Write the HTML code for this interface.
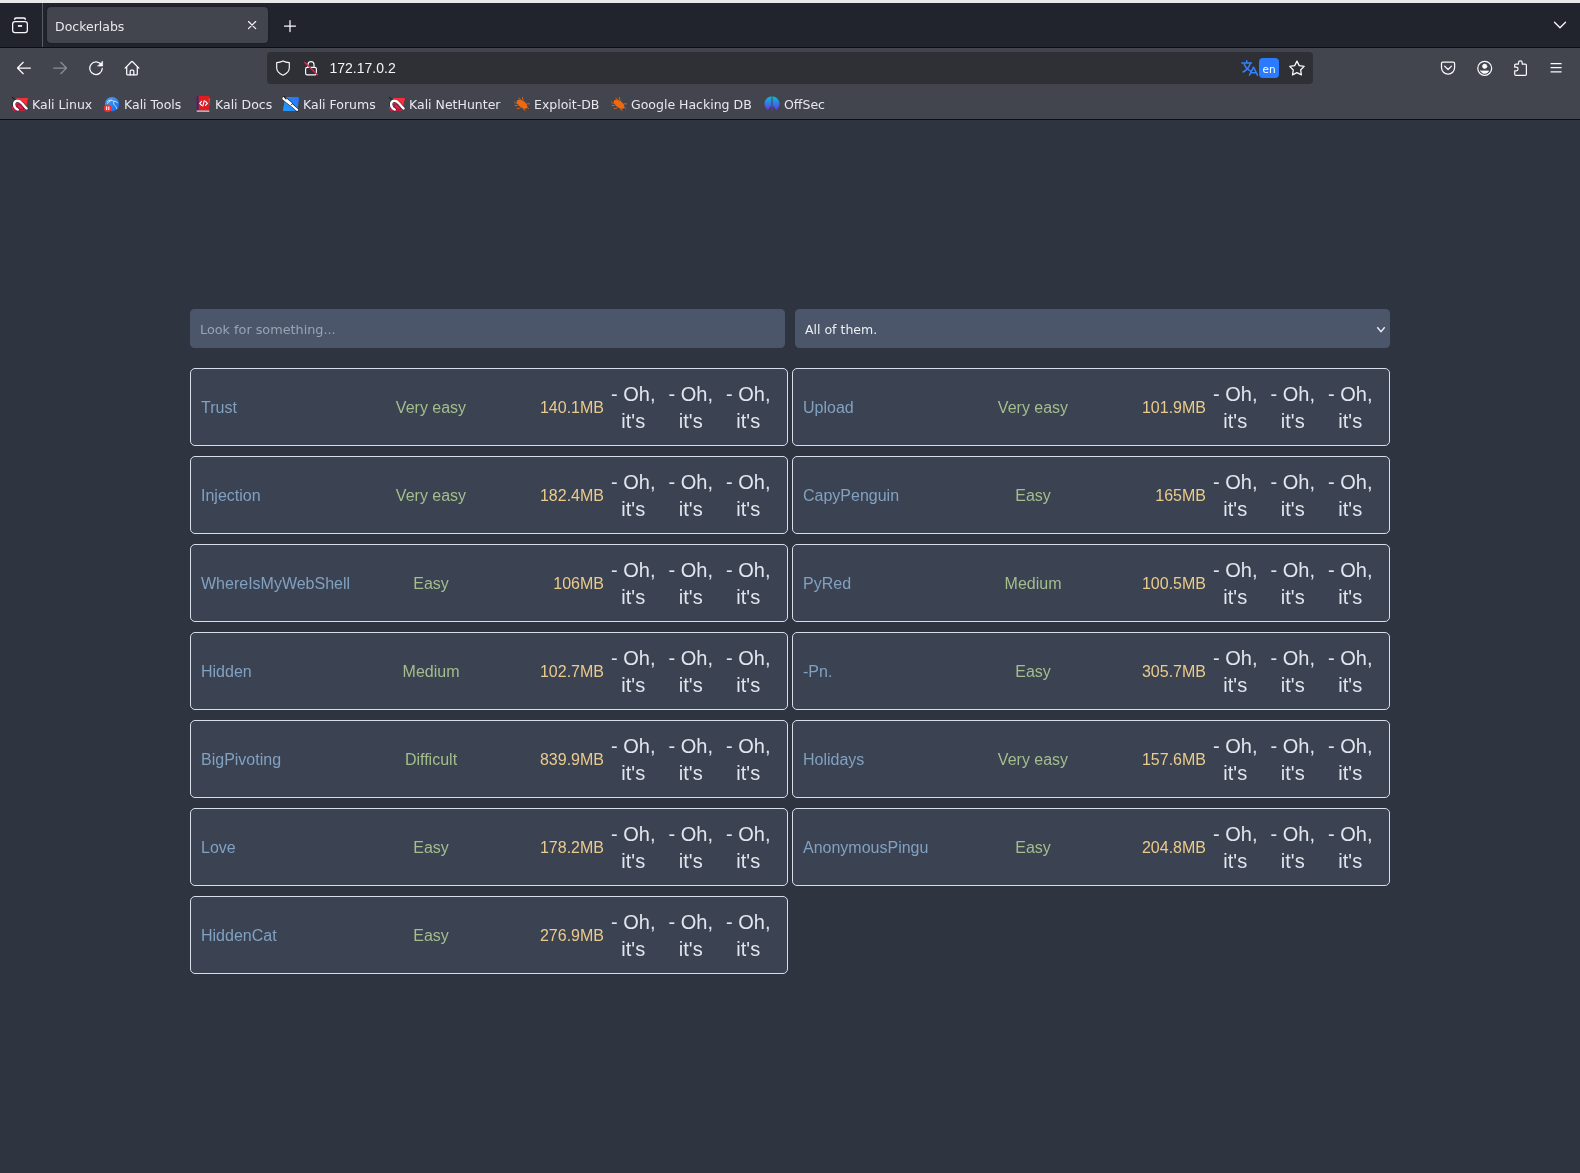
<!DOCTYPE html>
<html lang="en">
<head>
<meta charset="utf-8">
<title>Dockerlabs</title>
<style>
*{box-sizing:border-box;margin:0;padding:0}
html,body{width:1580px;height:1173px;overflow:hidden;background:#2e3440}
body{position:relative;font-family:"Liberation Sans",sans-serif;will-change:transform}
.ui{font-family:"DejaVu Sans","Liberation Sans",sans-serif}
/* chrome */
#topstrip{position:absolute;left:0;top:0;width:1580px;height:3px;background:#e9e9e9}
#tabbar{position:absolute;left:0;top:3px;width:1580px;height:44px;background:#22242d}
#tabsep{position:absolute;left:42px;top:3px;width:1px;height:44px;background:#595b62}
#tab{position:absolute;left:47px;top:7px;width:221px;height:36px;background:#42454e;border-radius:4px;box-shadow:0 0 1.5px rgba(0,0,0,.55)}
#tabtitle{position:absolute;left:55px;top:19px;font-size:12.5px;color:#e8e8ec;line-height:16px;white-space:nowrap}
#navsep{position:absolute;left:0;top:47px;width:1580px;height:1px;background:#0d0e13}
#navbar{position:absolute;left:0;top:48px;width:1580px;height:71px;background:#42454e}
#urlbar{position:absolute;left:267px;top:52px;width:1046px;height:32px;background:#2f3035;border-radius:4px}
#urltext{position:absolute;left:329.5px;top:60px;font-size:14px;font-family:"Liberation Sans",sans-serif;color:#f5f5f7;line-height:16px;white-space:nowrap}
#chromeline{position:absolute;left:0;top:119px;width:1580px;height:1px;background:#0d0f15}
.bm{position:absolute;top:97px;font-size:12.5px;color:#e8e8ec;line-height:16px;white-space:nowrap}
svg.ic{position:absolute;overflow:visible}
#enb{position:absolute;left:1259px;top:58px;width:20px;height:20px;border-radius:4px;background:#2a7bff;color:#fff;font-size:10.5px;line-height:23px;text-align:center;font-family:"DejaVu Sans",sans-serif}
/* page */
#search{position:absolute;left:190px;top:309px;width:595px;height:39px;background:#4c566a;border-radius:4.5px}
#search span{position:absolute;left:10px;top:13px;font-size:12.8px;line-height:16px;color:#9ba3b3;white-space:nowrap}
#select{position:absolute;left:795px;top:309px;width:595px;height:39px;background:#4c566a;border-radius:4.5px}
#select span{position:absolute;left:10px;top:13px;font-size:12.5px;line-height:16px;color:#eceff4;white-space:nowrap}
.card{position:absolute;width:598px;height:78px;background:#3b4252;border:1px solid #d8dee9;border-radius:5px}
.card .n,.card .d,.card .s{position:absolute;top:29px;font-size:16px;line-height:20px;white-space:nowrap}
.card .n{left:10px;color:#81a1c1}
.card .d{left:182px;width:116px;text-align:center;color:#a3be8c}
.card .s{left:298px;width:115px;text-align:right;color:#ebcb8b}
.card .b{position:absolute;top:12px;width:57.5px;text-align:center;font-size:20px;line-height:27.25px;color:#e1e5ed;font-family:"Liberation Sans",sans-serif}
.card .b1{left:413.5px}.card .b2{left:471px}.card .b3{left:528.5px}
</style>
</head>
<body>
<div id="topstrip"></div>
<div id="tabbar"></div>
<div id="tabsep"></div>
<div id="tab"></div>
<div id="tabtitle" class="ui">Dockerlabs</div>
<div id="navsep"></div>
<div id="navbar"></div>
<div id="urlbar"></div>
<div id="urltext">172.17.0.2</div>
<div id="chromeline"></div>
<svg class="ic" style="left:12px;top:96px" width="16" height="16" viewBox="0 0 16 16"><path d="M4.800 1.900L16 2.100 13.700 13.200 12.300 14.500 2.100 15 0 12.200z" fill="#fa2c37"/><path d="M0 12.200L2.100 15l10.200-.5 1.400-1.300L6 7 1 9z" fill="#d81c4c"/><path d="M0.200 1.400L3.600 3.800" fill="none" stroke="#16171c" stroke-width="1" stroke-linecap="round"/><path d="M5.800 13.600C3.500 12.400 2 10.400 2.100 8.300 2.200 6.200 3.600 4.800 5.600 4.800c2 0 3.400 1.400 4.800 3 1.300 1.600 2.600 3.400 4.300 4.600" fill="none" stroke="#16171c" stroke-width="3.300" stroke-linecap="round"/><path d="M5.800 13.600C3.500 12.400 2 10.400 2.100 8.300 2.200 6.200 3.600 4.800 5.600 4.800c2 0 3.400 1.400 4.800 3 1.300 1.600 2.600 3.400 4.300 4.600" fill="none" stroke="#fff" stroke-width="2.400" stroke-linecap="round"/><path d="M5.200 9.300c.3-1.200 1.500-1.600 2.600-.8 1.300.9 2.700 2.700 4.200 4.700l-3.800.3C6.600 12.300 5 11 5.200 9.300z" fill="#e2204a" stroke="#16171c" stroke-width=".4"/></svg>
<div class="bm ui" style="left:32px">Kali Linux</div>
<svg class="ic" style="left:104px;top:96px" width="16" height="16" viewBox="0 0 16 16"><defs><linearGradient id="gkt104" x1="0" y1="0" x2="1" y2="1"><stop offset="0" stop-color="#4aa8f2"/><stop offset="1" stop-color="#1565e6"/></linearGradient></defs><circle cx="8.100" cy="8.100" r="7.150" fill="url(#gkt104)"/><path d="M3.500 5.500C5.500 3.800 8 3.600 9.800 5.300c1.500-.3 2.900.3 3.700 1.500M9.800 5.300c-.6 1.500-.2 3 1 4.100 1 .9 1.700 1.900 2 3.100M7 4.500c-1.500.6-2.700 1.600-3.500 3" fill="none" stroke="#e9f3ff" stroke-width=".8" stroke-linecap="round"/><circle cx="3.600" cy="12.200" r="3.800" fill="#fb2b2e"/><path d="M2.600 10.500v3.400M4.800 10.500v3.400" stroke="#fff" stroke-width="1.100"/></svg>
<div class="bm ui" style="left:124px">Kali Tools</div>
<svg class="ic" style="left:195px;top:96px" width="16" height="16" viewBox="0 0 16 16"><path d="M1.500 1.200C1.500.5 2 0 2.700 0h10.600c.6 0 1 .4 1 1v13.500H1.500z" fill="#e11b22"/><path d="M1.500 1.200C1.500.5 2 0 2.700 0h.9v14.500H1.500z" fill="#17357f"/><path d="M1.500 14.500h12.800v1.300H2.600c-.6 0-1.100-.6-1.100-1.300z" fill="#f3c9c9"/><path d="M13.800 2.500h.8v2h-.8z" fill="#f39a1e"/><path d="M13.800 5h.8v2h-.8z" fill="#37b24d"/><path d="M13.800 7.500h.8v2h-.8z" fill="#2b78e4"/><path d="M6.600 5.300L4.700 7.300l1.900 2M10.500 5.300l1.900 2-1.900 2M9.300 4.600L7.800 10" fill="none" stroke="#fff" stroke-width="1.100" stroke-linecap="round" stroke-linejoin="round"/></svg>
<div class="bm ui" style="left:215px">Kali Docs</div>
<svg class="ic" style="left:283px;top:96px" width="16" height="16" viewBox="0 0 16 16"><defs><linearGradient id="gkf" x1="0" y1="1" x2="1" y2="0"><stop offset="0" stop-color="#1f9cf9"/><stop offset="1" stop-color="#2a72fb"/></linearGradient></defs><path d="M3.400 1h11.400c.8 0 1.300.6 1.200 1.300l-1.500 11.500c-.1.700-.7 1.200-1.400 1.200H1.200c-.7 0-1.300-.6-1.200-1.300L2 2.200C2.100 1.500 2.700 1 3.400 1z" fill="url(#gkf)"/><path d="M.9 2.400L7.300 7.400" fill="none" stroke="#15161b" stroke-width="4.200" stroke-linecap="round"/><path d="M1 2.300l13.200 11.500" fill="none" stroke="#15161b" stroke-width="3.300" stroke-linecap="round"/><path d="M.9 2.400L7.300 7.400" fill="none" stroke="#fff" stroke-width="3.200" stroke-linecap="round"/><path d="M1 2.300l13.200 11.500" fill="none" stroke="#fff" stroke-width="2.300" stroke-linecap="round"/><path d="M1.300.8l1.700 2.200" stroke="#15161b" stroke-width="1.100" stroke-linecap="round"/><circle cx="8.600" cy="8.500" r=".55" fill="#15161b"/></svg>
<div class="bm ui" style="left:303px">Kali Forums</div>
<svg class="ic" style="left:389px;top:96px" width="16" height="16" viewBox="0 0 16 16"><path d="M4.800 1.900L16 2.100 13.700 13.200 12.300 14.500 2.100 15 0 12.200z" fill="#fa2c37"/><path d="M0 12.200L2.100 15l10.200-.5 1.400-1.300L6 7 1 9z" fill="#d81c4c"/><path d="M0.200 1.400L3.600 3.800" fill="none" stroke="#16171c" stroke-width="1" stroke-linecap="round"/><path d="M5.800 13.600C3.500 12.400 2 10.400 2.100 8.300 2.200 6.200 3.600 4.800 5.600 4.800c2 0 3.400 1.400 4.800 3 1.300 1.600 2.600 3.400 4.300 4.600" fill="none" stroke="#16171c" stroke-width="3.300" stroke-linecap="round"/><path d="M5.800 13.600C3.500 12.400 2 10.400 2.100 8.300 2.200 6.200 3.600 4.800 5.600 4.800c2 0 3.400 1.400 4.800 3 1.300 1.600 2.600 3.400 4.300 4.600" fill="none" stroke="#fff" stroke-width="2.400" stroke-linecap="round"/><path d="M5.200 9.300c.3-1.200 1.500-1.600 2.600-.8 1.300.9 2.700 2.700 4.200 4.700l-3.800.3C6.600 12.300 5 11 5.200 9.300z" fill="#e2204a" stroke="#16171c" stroke-width=".4"/></svg>
<div class="bm ui" style="left:409px">Kali NetHunter</div>
<svg class="ic" style="left:514px;top:96px" width="16" height="16" viewBox="0 0 16 16"><g fill="none" stroke="#f1690f" stroke-linecap="round" stroke-width=".9"><path d="M5 2.200c.7.200 1.300.8 1.500 1.700M8.500 1.500c-.1.900.1 1.800.7 2.500M.5 6c.8.900 1.700 1.400 2.800 1.500M12 8.300c1.100-.5 2.300-.7 3.500-.5M3 12.500c1.200.2 2.400-.1 3.300-.8M9.500 13c.3.700.8 1.200 1.500 1.500M12.500 11c.8.200 1.500.6 2 1.300M1.200 9.500c.7.300 1.400.3 2.100 0"/></g><path d="M3.200 4.300c1.600-1.100 4.200-.7 6.500.9 2.300 1.600 4 4.200 3.600 6-.3 1.500-2.300 1.900-4.300 1.200C7 11.700 4.800 10 3.600 8.100 2.700 6.700 2.400 5.100 3.200 4.300z" fill="#f1690f"/></svg>
<div class="bm ui" style="left:534px">Exploit-DB</div>
<svg class="ic" style="left:611px;top:96px" width="16" height="16" viewBox="0 0 16 16"><g fill="none" stroke="#f1690f" stroke-linecap="round" stroke-width=".9"><path d="M5 2.200c.7.200 1.300.8 1.500 1.700M8.500 1.500c-.1.900.1 1.800.7 2.500M.5 6c.8.900 1.700 1.400 2.800 1.500M12 8.300c1.100-.5 2.300-.7 3.500-.5M3 12.500c1.200.2 2.400-.1 3.300-.8M9.500 13c.3.700.8 1.200 1.500 1.500M12.500 11c.8.200 1.500.6 2 1.300M1.200 9.500c.7.300 1.400.3 2.100 0"/></g><path d="M3.200 4.300c1.600-1.100 4.200-.7 6.500.9 2.300 1.600 4 4.200 3.600 6-.3 1.500-2.300 1.900-4.300 1.200C7 11.700 4.800 10 3.600 8.100 2.700 6.700 2.400 5.100 3.200 4.300z" fill="#f1690f"/></svg>
<div class="bm ui" style="left:631px">Google Hacking DB</div>
<svg class="ic" style="left:764px;top:96px" width="16" height="16" viewBox="0 0 16 16"><defs><linearGradient id="gos" x1="0" y1="0" x2="0" y2="1"><stop offset="0" stop-color="#0fbad2"/><stop offset=".55" stop-color="#3b6fe8"/><stop offset="1" stop-color="#7a1df2"/></linearGradient></defs><path d="M7 .5C3.2 1 .5 4 .5 7.700c0 2.600 1.300 4.900 3.400 6.300L7 9.800zM9 .5c3.800.5 6.500 3.500 6.500 7.200 0 2.600-1.300 4.900-3.400 6.300L9 9.800zM7.450.3h1.100l-.25 15.400h-.6z" fill="url(#gos)"/></svg>
<div class="bm ui" style="left:784px">OffSec</div>
<svg class="ic" style="left:12px;top:17px" width="16" height="16" viewBox="0 0 16 16" fill="none" stroke="#fbfbfe" stroke-width="1.25" stroke-linecap="round" stroke-linejoin="round"><rect x=".65" y="4.650" width="14.700" height="10.850" rx="2.300"/><path d="M2.650 2.700v-.3A1.500 1.500 0 0 1 4.150.9h7.700a1.500 1.500 0 0 1 1.500 1.500v.3" stroke-width="1.550" stroke-linecap="butt"/><rect x="5.900" y="8.100" width="4.200" height="1.700" fill="#fbfbfe" stroke="none"/></svg>
<svg class="ic" style="left:244px;top:17px" width="16" height="16" viewBox="0 0 16 16" fill="none" stroke="#fbfbfe" stroke-width="1.25" stroke-linecap="round" stroke-linejoin="round"><path d="M4.500 4.500l7.200 7.200M11.700 4.500l-7.200 7.200" stroke-width="1.150"/></svg>
<svg class="ic" style="left:281.7px;top:17.6px" width="16" height="16" viewBox="0 0 16 16" fill="none" stroke="#fbfbfe" stroke-width="1.25" stroke-linecap="round" stroke-linejoin="round"><path d="M8 2.500v11M2.500 8h11" stroke-width="1.250"/></svg>
<svg class="ic" style="left:1552px;top:17px" width="16" height="16" viewBox="0 0 16 16" fill="none" stroke="#fbfbfe" stroke-width="1.25" stroke-linecap="round" stroke-linejoin="round"><path d="M2.500 5.200L8 10.700l5.500-5.500" stroke-width="1.300"/></svg>
<svg class="ic" style="left:16px;top:60px" width="16" height="16" viewBox="0 0 16 16" fill="none" stroke="#fbfbfe" stroke-width="1.25" stroke-linecap="round" stroke-linejoin="round"><path d="M14.400 8H2M7.200 2.300L1.500 8l5.700 5.700"/></svg>
<svg class="ic" style="left:52px;top:60px;opacity:.4" width="16" height="16" viewBox="0 0 16 16" fill="none" stroke="#fbfbfe" stroke-width="1.25" stroke-linecap="round" stroke-linejoin="round"><path d="M1.600 8H14M8.800 2.300L14.500 8l-5.700 5.700"/></svg>
<svg class="ic" style="left:88px;top:60px" width="16" height="16" viewBox="0 0 16 16" fill="none" stroke="#fbfbfe" stroke-width="1.25" stroke-linecap="round" stroke-linejoin="round"><path d="M13.300 4.800A6.300 6.300 0 1 0 14.300 8.300"/><path d="M14.600 1.400v4.700H9.900z" fill="#fbfbfe" stroke-width=".6"/></svg>
<svg class="ic" style="left:123.6px;top:60px" width="16" height="16" viewBox="0 0 16 16" fill="none" stroke="#fbfbfe" stroke-width="1.25" stroke-linecap="round" stroke-linejoin="round"><path d="M1.100 8.100L7.400 1.800a.85.85 0 0 1 1.200 0l6.300 6.300"/><path d="M2.700 6.900v7c0 .6.400 1 1 1h8.600c.6 0 1-.4 1-1v-7"/><path d="M6.200 14.800v-3.800c0-.6.400-1 1-1h1.600c.6 0 1 .4 1 1v3.800"/></svg>
<svg class="ic" style="left:275px;top:60px" width="16" height="16" viewBox="0 0 16 16" fill="none" stroke="#fbfbfe" stroke-width="1.25" stroke-linecap="round" stroke-linejoin="round"><path d="M8 .9c2 1 4 1.500 6.300 1.700v5.200c0 3.400-2.500 6-6.300 7.400-3.800-1.400-6.300-4-6.300-7.400V2.600C4 2.400 6 1.900 8 .9z" stroke-width="1.150"/></svg>
<svg class="ic" style="left:303px;top:60px" width="16" height="16" viewBox="0 0 16 16" fill="none" stroke="#fbfbfe" stroke-width="1.25" stroke-linecap="round" stroke-linejoin="round"><rect x="2.600" y="7.300" width="10.800" height="7.600" rx="1.600" stroke-width="1.150"/><path d="M5 7.200V4.600a3 3 0 0 1 6 0v2.600" stroke-width="1.150"/><path d="M1.800 2.500l12.700 12.300" stroke="#e22850" stroke-width="1.300"/></svg>
<svg class="ic" style="left:1241px;top:59.5px" width="16" height="16" viewBox="0 0 16 16" fill="none" stroke="#fbfbfe" stroke-width="1.25" stroke-linecap="round" stroke-linejoin="round"><g stroke="#3382ff" stroke-width="1.500"><path d="M.9 2.900h9.600M5.700.7v2"/><path d="M9.300 3.300C8.300 7 5.800 10.200 2.100 12"/><path d="M3.200 4C4.300 7 6.500 9.500 9.700 11.200"/><path d="M8.500 15.200l4-8 4 8M10 12.700h5"/></g></svg>
<svg class="ic" style="left:1289px;top:60px" width="16" height="16" viewBox="0 0 16 16" fill="none" stroke="#fbfbfe" stroke-width="1.25" stroke-linecap="round" stroke-linejoin="round"><path d="M7.95 1.15L10.21 5.64L15.18 6.40L11.61 9.94L12.42 14.90L7.95 12.60L3.48 14.90L4.29 9.94L0.72 6.40L5.69 5.64z" stroke-width="1.250"/></svg>
<svg class="ic" style="left:1440px;top:60px" width="16" height="16" viewBox="0 0 16 16" fill="none" stroke="#fbfbfe" stroke-width="1.25" stroke-linecap="round" stroke-linejoin="round"><path d="M2.900 2.100h10.300c.8 0 1.400.6 1.400 1.400v4.100a6.550 6.550 0 0 1-13.100 0V3.500c0-.8.600-1.400 1.400-1.400z"/><path d="M4.600 6.100l3.450 3.400 3.450-3.400"/></svg>
<svg class="ic" style="left:1476.5px;top:60px" width="16" height="16" viewBox="0 0 16 16" fill="none" stroke="#fbfbfe" stroke-width="1.25" stroke-linecap="round" stroke-linejoin="round"><circle cx="7.7" cy="8.3" r="6.950"/><circle cx="7.700" cy="6.300" r="2.200" fill="#fbfbfe" stroke-width=".6"/><path d="M3.700 10.900h8c-.8 1.700-2.300 2.500-4 2.500s-3.200-.8-4-2.500z" fill="#fbfbfe" stroke-width=".6"/></svg>
<svg class="ic" style="left:1512px;top:60px" width="16" height="16" viewBox="0 0 16 16" fill="none" stroke="#fbfbfe" stroke-width="1.25" stroke-linecap="round" stroke-linejoin="round"><path d="M6.5 4.1V2.7a1.85 1.85 0 0 1 3.7 0v1.4h3.1c.6 0 1.1.5 1.1 1.1v9c0 .6-.5 1.1-1.1 1.1H3.800c-.6 0-1.100-.5-1.100-1.100v-3.300h1.500a1.850 1.850 0 0 0 0-3.700H2.700V5.200c0-.6.5-1.100 1.100-1.100z" stroke-width="1.200"/></svg>
<svg class="ic" style="left:1548px;top:60px" width="16" height="16" viewBox="0 0 16 16" fill="none" stroke="#fbfbfe" stroke-width="1.25" stroke-linecap="round" stroke-linejoin="round"><path d="M2.600 3.600h11M2.600 7.700h11M2.600 11.800h11" stroke-linecap="butt" stroke-width="1.300"/></svg>
<div id="enb">en</div>
<div id="search" class="ui"><span>Look for something...</span></div>
<div id="select" class="ui"><span>All of them.</span><svg style="position:absolute;left:580px;top:16.2px" width="12" height="10" viewBox="0 0 12 10" fill="none" stroke="#eceff4" stroke-width="1.400"><path d="M2.300 2.300L6 6.600l3.700-4.300"/></svg></div>
<div class="card" style="left:190px;top:368px"><span class="n">Trust</span><span class="d">Very easy</span><span class="s">140.1MB</span><span class="b b1 ui">- Oh, it's</span><span class="b b2 ui">- Oh, it's</span><span class="b b3 ui">- Oh, it's</span></div>
<div class="card" style="left:792px;top:368px"><span class="n">Upload</span><span class="d">Very easy</span><span class="s">101.9MB</span><span class="b b1 ui">- Oh, it's</span><span class="b b2 ui">- Oh, it's</span><span class="b b3 ui">- Oh, it's</span></div>
<div class="card" style="left:190px;top:456px"><span class="n">Injection</span><span class="d">Very easy</span><span class="s">182.4MB</span><span class="b b1 ui">- Oh, it's</span><span class="b b2 ui">- Oh, it's</span><span class="b b3 ui">- Oh, it's</span></div>
<div class="card" style="left:792px;top:456px"><span class="n">CapyPenguin</span><span class="d">Easy</span><span class="s">165MB</span><span class="b b1 ui">- Oh, it's</span><span class="b b2 ui">- Oh, it's</span><span class="b b3 ui">- Oh, it's</span></div>
<div class="card" style="left:190px;top:544px"><span class="n">WhereIsMyWebShell</span><span class="d">Easy</span><span class="s">106MB</span><span class="b b1 ui">- Oh, it's</span><span class="b b2 ui">- Oh, it's</span><span class="b b3 ui">- Oh, it's</span></div>
<div class="card" style="left:792px;top:544px"><span class="n">PyRed</span><span class="d">Medium</span><span class="s">100.5MB</span><span class="b b1 ui">- Oh, it's</span><span class="b b2 ui">- Oh, it's</span><span class="b b3 ui">- Oh, it's</span></div>
<div class="card" style="left:190px;top:632px"><span class="n">Hidden</span><span class="d">Medium</span><span class="s">102.7MB</span><span class="b b1 ui">- Oh, it's</span><span class="b b2 ui">- Oh, it's</span><span class="b b3 ui">- Oh, it's</span></div>
<div class="card" style="left:792px;top:632px"><span class="n">-Pn.</span><span class="d">Easy</span><span class="s">305.7MB</span><span class="b b1 ui">- Oh, it's</span><span class="b b2 ui">- Oh, it's</span><span class="b b3 ui">- Oh, it's</span></div>
<div class="card" style="left:190px;top:720px"><span class="n">BigPivoting</span><span class="d">Difficult</span><span class="s">839.9MB</span><span class="b b1 ui">- Oh, it's</span><span class="b b2 ui">- Oh, it's</span><span class="b b3 ui">- Oh, it's</span></div>
<div class="card" style="left:792px;top:720px"><span class="n">Holidays</span><span class="d">Very easy</span><span class="s">157.6MB</span><span class="b b1 ui">- Oh, it's</span><span class="b b2 ui">- Oh, it's</span><span class="b b3 ui">- Oh, it's</span></div>
<div class="card" style="left:190px;top:808px"><span class="n">Love</span><span class="d">Easy</span><span class="s">178.2MB</span><span class="b b1 ui">- Oh, it's</span><span class="b b2 ui">- Oh, it's</span><span class="b b3 ui">- Oh, it's</span></div>
<div class="card" style="left:792px;top:808px"><span class="n">AnonymousPingu</span><span class="d">Easy</span><span class="s">204.8MB</span><span class="b b1 ui">- Oh, it's</span><span class="b b2 ui">- Oh, it's</span><span class="b b3 ui">- Oh, it's</span></div>
<div class="card" style="left:190px;top:896px"><span class="n">HiddenCat</span><span class="d">Easy</span><span class="s">276.9MB</span><span class="b b1 ui">- Oh, it's</span><span class="b b2 ui">- Oh, it's</span><span class="b b3 ui">- Oh, it's</span></div>
</body>
</html>
